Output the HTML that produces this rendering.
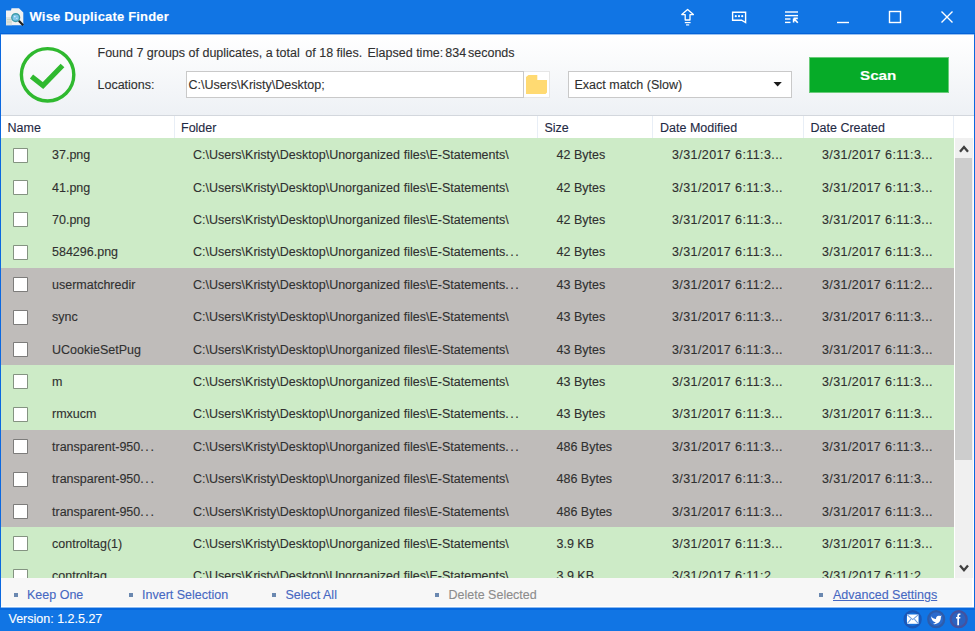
<!DOCTYPE html>
<html><head><meta charset="utf-8"><style>
html,body{margin:0;padding:0;}
body{width:975px;height:631px;overflow:hidden;position:relative;background:#1175e4;font-family:"Liberation Sans",sans-serif;font-size:12.5px;color:#303030;-webkit-text-stroke:0.12px currentColor;}
.a{position:absolute;}
.t{position:absolute;white-space:nowrap;line-height:1;}
.title{color:#fff;font-weight:bold;font-size:13px;}
.hdr{color:#1f2a44;}
.row{position:absolute;left:1px;width:953px;}
.g{background:#cdebc7;}
.d{background:#bfbcba;}
.cb{position:absolute;left:13px;width:13px;height:13px;border:1px solid rgba(60,60,60,0.5);background:#fff;background-clip:padding-box;border-radius:1px;}
.lnk{color:#4668c2;}
.dis{color:#8c8c8c;}
.bul{position:absolute;width:4px;height:4px;background:#6a88b0;}
</style></head><body>
<div class="a" style="left:0;top:0;width:975px;height:33px;background:#1175e4;"></div>
<div class="a" style="left:0;top:33px;width:975px;height:1px;background:#0563d8;"></div>
<div class="a" style="left:1px;top:34px;width:973px;height:1px;background:#9cc3f0;"></div>
<svg class="a" style="left:0;top:0" width="30" height="30" viewBox="0 0 30 30">
<path d="M6 10.5 L11 10.5 L11.5 8.3 L19 8.3 L23.3 12.6 L23.3 25.2 L6 25.2 Z" fill="#f2f2f2"/>
<path d="M6 17 L12 17 L12 25.2 L6 25.2 Z" fill="#dfe3df"/>
<path d="M7 19.5 L11.5 19.5 M7 22 L11.5 22" stroke="#c8d8c8" stroke-width="1"/>
<line x1="18.8" y1="20.8" x2="23.2" y2="25.2" stroke="#1e1e1e" stroke-width="2.2"/>
<circle cx="15.7" cy="17.6" r="3.9" fill="#7cc4e8" stroke="#3e9aa8" stroke-width="1.4"/>
<circle cx="14.8" cy="16.6" r="0.8" fill="#d8f0ff"/>
<circle cx="16.8" cy="18.4" r="0.7" fill="#c0e4ff"/>
</svg>
<div class="t title" style="left:29.5px;top:9.80px;letter-spacing:0.18px;">Wise Duplicate Finder</div>
<svg class="a" style="left:660px;top:0" width="315" height="33" viewBox="660 0 315 33" fill="none" stroke="#fff" stroke-width="1.4">
<path d="M687.6 9.4 L693.4 14.6 L690 14.6 L690 20 L685.2 20 L685.2 14.6 L681.8 14.6 Z" stroke-linejoin="round" stroke-width="1.3"/>
<line x1="684.8" y1="22.6" x2="690.6" y2="22.6" stroke-width="1.2"/>
<line x1="686" y1="24.9" x2="689.2" y2="24.9" stroke-width="1.2"/>
<path d="M732.6 12.2 L745.6 12.2 L745.6 22.5 L741.6 20.2 L732.6 20.2 Z"/>
<circle cx="735.8" cy="16.2" r="1.1" fill="#fff" stroke="none"/>
<circle cx="739" cy="16.2" r="1.1" fill="#fff" stroke="none"/>
<circle cx="742.2" cy="16.2" r="1.1" fill="#fff" stroke="none"/>
<line x1="785" y1="12" x2="798" y2="12"/>
<line x1="785" y1="15.6" x2="798" y2="15.6"/>
<line x1="785" y1="19" x2="790.5" y2="19"/>
<line x1="785" y1="22.4" x2="790.5" y2="22.4"/>
<path d="M797.8 22.8 L793.8 18.6 M793.6 18.4 L793.6 22.4 M793.6 18.4 L797.8 18.4" stroke-width="1.6"/>
<line x1="837" y1="22.5" x2="849" y2="22.5"/>
<rect x="889.5" y="11.5" width="11" height="11"/>
<path d="M941.5 11.5 L952.5 22.5 M952.5 11.5 L941.5 22.5"/>
</svg>
<div class="a" style="left:1px;top:35px;width:973px;height:572px;background:#fff;"></div>
<div class="a" style="left:0;top:35px;width:1px;height:572px;background:#0b68df;"></div>
<div class="a" style="left:974px;top:35px;width:1px;height:572px;background:#0b68df;"></div>
<div class="a" style="left:1px;top:35px;width:973px;height:80px;background:linear-gradient(#ffffff,#eef1f5);"></div>
<svg class="a" style="left:10px;top:40px" width="80" height="70" viewBox="10 40 80 70">
<circle cx="47.6" cy="74.8" r="26.2" fill="none" stroke="#2fb92f" stroke-width="3.4"/>
<path d="M31.5 76.5 L43 85.5 L62.5 65.5" fill="none" stroke="#2fb92f" stroke-width="5.2"/>
</svg>
<div class="t " style="left:97.5px;top:46.82px;">Found 7 groups of duplicates, a total</div>
<div class="t " style="left:305.3px;top:46.82px;">of 18 files.</div>
<div class="t " style="left:367.5px;top:46.82px;">Elapsed time:</div>
<div class="t " style="left:445.3px;top:46.82px;">834</div>
<div class="t " style="left:468px;top:46.82px;">seconds</div>
<div class="t " style="left:97.5px;top:78.82px;">Locations:</div>
<div class="a" style="left:186px;top:71px;width:336px;height:25px;border:1px solid #c9c9c9;background:#fff;"></div>
<div class="t " style="left:188.5px;top:78.92px;">C:\Users\Kristy\Desktop;</div>
<div class="a" style="left:524px;top:71px;width:25px;height:25px;border:1px solid #e6e6e6;border-left:none;background:#fff;"></div>
<svg class="a" style="left:524px;top:70px" width="28" height="28" viewBox="524 70 28 28">
<path d="M526 77 L528.5 75 L537.3 75 L537.3 80 L547 80 L547 92.5 L545.5 94 L526 94 Z" fill="#ffda72"/>
</svg>
<div class="a" style="left:568px;top:71px;width:222px;height:25px;border:1px solid #c9c9c9;background:#fff;"></div>
<div class="t " style="left:574.5px;top:78.82px;">Exact match (Slow)</div>
<svg class="a" style="left:770px;top:78px" width="16" height="12" viewBox="770 78 16 12"><path d="M773.5 82 L781.8 82 L777.65 86.5 Z" fill="#1a1a1a"/></svg>
<div class="a" style="left:809px;top:57px;width:138px;height:34px;background:#06ab28;border:1px solid #6acb7a;"></div>
<div class="t title" style="left:860px;top:68.77px;transform:scaleX(1.17);transform-origin:0 0;">Scan</div>
<div class="a" style="left:1px;top:115px;width:973px;height:1px;background:#d3d7dd;"></div>
<div class="a" style="left:1px;top:116px;width:973px;height:22px;background:#fff;"></div>
<div class="a" style="left:174px;top:116px;width:1px;height:22px;background:#e8eef6;"></div>
<div class="a" style="left:537px;top:116px;width:1px;height:22px;background:#e8eef6;"></div>
<div class="a" style="left:652px;top:116px;width:1px;height:22px;background:#e8eef6;"></div>
<div class="a" style="left:803px;top:116px;width:1px;height:22px;background:#e8eef6;"></div>
<div class="a" style="left:953px;top:116px;width:1px;height:22px;background:#e8eef6;"></div>
<div class="t hdr" style="left:7.5px;top:122.02px;">Name</div>
<div class="t hdr" style="left:181px;top:122.02px;">Folder</div>
<div class="t hdr" style="left:544.5px;top:122.02px;">Size</div>
<div class="t hdr" style="left:660px;top:122.02px;">Date Modified</div>
<div class="t hdr" style="left:810.5px;top:122.02px;">Date Created</div>
<div class="a" style="left:0;top:138px;width:975px;height:440px;overflow:hidden;">
<div class="row g" style="top:0px;height:32px;"></div>
<div class="cb" style="top:10px;"></div>
<div class="t " style="left:52px;top:11.12px;">37.png</div>
<div class="t " style="left:193px;top:11.12px;">C:\Users\Kristy\Desktop\Unorganized</div>
<div class="t " style="left:403.8px;top:11.12px;">files\E-Statements\</div>
<div class="t " style="left:556.5px;top:11.12px;">42 Bytes</div>
<div class="t " style="left:672px;top:11.12px;letter-spacing:0.4px;">3/31/2017 6:11:3...</div>
<div class="t " style="left:822px;top:11.12px;letter-spacing:0.4px;">3/31/2017 6:11:3...</div>
<div class="row g" style="top:32px;height:33px;"></div>
<div class="cb" style="top:42px;"></div>
<div class="t " style="left:52px;top:43.52px;">41.png</div>
<div class="t " style="left:193px;top:43.52px;">C:\Users\Kristy\Desktop\Unorganized</div>
<div class="t " style="left:403.8px;top:43.52px;">files\E-Statements\</div>
<div class="t " style="left:556.5px;top:43.52px;">42 Bytes</div>
<div class="t " style="left:672px;top:43.52px;letter-spacing:0.4px;">3/31/2017 6:11:3...</div>
<div class="t " style="left:822px;top:43.52px;letter-spacing:0.4px;">3/31/2017 6:11:3...</div>
<div class="row g" style="top:65px;height:32px;"></div>
<div class="cb" style="top:74px;"></div>
<div class="t " style="left:52px;top:75.92px;">70.png</div>
<div class="t " style="left:193px;top:75.92px;">C:\Users\Kristy\Desktop\Unorganized</div>
<div class="t " style="left:403.8px;top:75.92px;">files\E-Statements\</div>
<div class="t " style="left:556.5px;top:75.92px;">42 Bytes</div>
<div class="t " style="left:672px;top:75.92px;letter-spacing:0.4px;">3/31/2017 6:11:3...</div>
<div class="t " style="left:822px;top:75.92px;letter-spacing:0.4px;">3/31/2017 6:11:3...</div>
<div class="row g" style="top:97px;height:33px;"></div>
<div class="cb" style="top:107px;"></div>
<div class="t " style="left:52px;top:108.32px;">584296.png</div>
<div class="t " style="left:193px;top:108.32px;">C:\Users\Kristy\Desktop\Unorganized</div>
<div class="t " style="left:403.8px;top:108.32px;">files\E-Statements<span style="letter-spacing:1.5px">...</span></div>
<div class="t " style="left:556.5px;top:108.32px;">42 Bytes</div>
<div class="t " style="left:672px;top:108.32px;letter-spacing:0.4px;">3/31/2017 6:11:3...</div>
<div class="t " style="left:822px;top:108.32px;letter-spacing:0.4px;">3/31/2017 6:11:3...</div>
<div class="row d" style="top:130px;height:32px;"></div>
<div class="cb" style="top:139px;"></div>
<div class="t " style="left:52px;top:140.72px;">usermatchredir</div>
<div class="t " style="left:193px;top:140.72px;">C:\Users\Kristy\Desktop\Unorganized</div>
<div class="t " style="left:403.8px;top:140.72px;">files\E-Statements<span style="letter-spacing:1.5px">...</span></div>
<div class="t " style="left:556.5px;top:140.72px;">43 Bytes</div>
<div class="t " style="left:672px;top:140.72px;letter-spacing:0.4px;">3/31/2017 6:11:2...</div>
<div class="t " style="left:822px;top:140.72px;letter-spacing:0.4px;">3/31/2017 6:11:2...</div>
<div class="row d" style="top:162px;height:32px;"></div>
<div class="cb" style="top:172px;"></div>
<div class="t " style="left:52px;top:173.12px;">sync</div>
<div class="t " style="left:193px;top:173.12px;">C:\Users\Kristy\Desktop\Unorganized</div>
<div class="t " style="left:403.8px;top:173.12px;">files\E-Statements\</div>
<div class="t " style="left:556.5px;top:173.12px;">43 Bytes</div>
<div class="t " style="left:672px;top:173.12px;letter-spacing:0.4px;">3/31/2017 6:11:3...</div>
<div class="t " style="left:822px;top:173.12px;letter-spacing:0.4px;">3/31/2017 6:11:3...</div>
<div class="row d" style="top:194px;height:33px;"></div>
<div class="cb" style="top:204px;"></div>
<div class="t " style="left:52px;top:205.52px;">UCookieSetPug</div>
<div class="t " style="left:193px;top:205.52px;">C:\Users\Kristy\Desktop\Unorganized</div>
<div class="t " style="left:403.8px;top:205.52px;">files\E-Statements\</div>
<div class="t " style="left:556.5px;top:205.52px;">43 Bytes</div>
<div class="t " style="left:672px;top:205.52px;letter-spacing:0.4px;">3/31/2017 6:11:3...</div>
<div class="t " style="left:822px;top:205.52px;letter-spacing:0.4px;">3/31/2017 6:11:3...</div>
<div class="row g" style="top:227px;height:32px;"></div>
<div class="cb" style="top:236px;"></div>
<div class="t " style="left:52px;top:237.92px;">m</div>
<div class="t " style="left:193px;top:237.92px;">C:\Users\Kristy\Desktop\Unorganized</div>
<div class="t " style="left:403.8px;top:237.92px;">files\E-Statements\</div>
<div class="t " style="left:556.5px;top:237.92px;">43 Bytes</div>
<div class="t " style="left:672px;top:237.92px;letter-spacing:0.4px;">3/31/2017 6:11:3...</div>
<div class="t " style="left:822px;top:237.92px;letter-spacing:0.4px;">3/31/2017 6:11:3...</div>
<div class="row g" style="top:259px;height:33px;"></div>
<div class="cb" style="top:269px;"></div>
<div class="t " style="left:52px;top:270.32px;">rmxucm</div>
<div class="t " style="left:193px;top:270.32px;">C:\Users\Kristy\Desktop\Unorganized</div>
<div class="t " style="left:403.8px;top:270.32px;">files\E-Statements<span style="letter-spacing:1.5px">...</span></div>
<div class="t " style="left:556.5px;top:270.32px;">43 Bytes</div>
<div class="t " style="left:672px;top:270.32px;letter-spacing:0.4px;">3/31/2017 6:11:3...</div>
<div class="t " style="left:822px;top:270.32px;letter-spacing:0.4px;">3/31/2017 6:11:3...</div>
<div class="row d" style="top:292px;height:32px;"></div>
<div class="cb" style="top:301px;"></div>
<div class="t " style="left:52px;top:302.72px;">transparent-950<span style="letter-spacing:1.6px">...</span></div>
<div class="t " style="left:193px;top:302.72px;">C:\Users\Kristy\Desktop\Unorganized</div>
<div class="t " style="left:403.8px;top:302.72px;">files\E-Statements<span style="letter-spacing:1.5px">...</span></div>
<div class="t " style="left:556.5px;top:302.72px;">486 Bytes</div>
<div class="t " style="left:672px;top:302.72px;letter-spacing:0.4px;">3/31/2017 6:11:3...</div>
<div class="t " style="left:822px;top:302.72px;letter-spacing:0.4px;">3/31/2017 6:11:3...</div>
<div class="row d" style="top:324px;height:32px;"></div>
<div class="cb" style="top:334px;"></div>
<div class="t " style="left:52px;top:335.12px;">transparent-950<span style="letter-spacing:1.6px">...</span></div>
<div class="t " style="left:193px;top:335.12px;">C:\Users\Kristy\Desktop\Unorganized</div>
<div class="t " style="left:403.8px;top:335.12px;">files\E-Statements\</div>
<div class="t " style="left:556.5px;top:335.12px;">486 Bytes</div>
<div class="t " style="left:672px;top:335.12px;letter-spacing:0.4px;">3/31/2017 6:11:3...</div>
<div class="t " style="left:822px;top:335.12px;letter-spacing:0.4px;">3/31/2017 6:11:3...</div>
<div class="row d" style="top:356px;height:33px;"></div>
<div class="cb" style="top:366px;"></div>
<div class="t " style="left:52px;top:367.52px;">transparent-950<span style="letter-spacing:1.6px">...</span></div>
<div class="t " style="left:193px;top:367.52px;">C:\Users\Kristy\Desktop\Unorganized</div>
<div class="t " style="left:403.8px;top:367.52px;">files\E-Statements\</div>
<div class="t " style="left:556.5px;top:367.52px;">486 Bytes</div>
<div class="t " style="left:672px;top:367.52px;letter-spacing:0.4px;">3/31/2017 6:11:3...</div>
<div class="t " style="left:822px;top:367.52px;letter-spacing:0.4px;">3/31/2017 6:11:3...</div>
<div class="row g" style="top:389px;height:32px;"></div>
<div class="cb" style="top:398px;"></div>
<div class="t " style="left:52px;top:399.92px;">controltag(1)</div>
<div class="t " style="left:193px;top:399.92px;">C:\Users\Kristy\Desktop\Unorganized</div>
<div class="t " style="left:403.8px;top:399.92px;">files\E-Statements\</div>
<div class="t " style="left:556.5px;top:399.92px;">3.9 KB</div>
<div class="t " style="left:672px;top:399.92px;letter-spacing:0.4px;">3/31/2017 6:11:3...</div>
<div class="t " style="left:822px;top:399.92px;letter-spacing:0.4px;">3/31/2017 6:11:3...</div>
<div class="row g" style="top:421px;height:33px;"></div>
<div class="cb" style="top:431px;"></div>
<div class="t " style="left:52px;top:432.32px;">controltag</div>
<div class="t " style="left:193px;top:432.32px;">C:\Users\Kristy\Desktop\Unorganized</div>
<div class="t " style="left:403.8px;top:432.32px;">files\E-Statements\</div>
<div class="t " style="left:556.5px;top:432.32px;">3.9 KB</div>
<div class="t " style="left:672px;top:432.32px;letter-spacing:0.4px;">3/31/2017 6:11:2...</div>
<div class="t " style="left:822px;top:432.32px;letter-spacing:0.4px;">3/31/2017 6:11:2...</div>
</div>
<div class="a" style="left:955px;top:138px;width:18px;height:440px;background:#f0f0f0;"></div>
<div class="a" style="left:955px;top:158px;width:17px;height:302px;background:#cdcdcd;"></div>
<svg class="a" style="left:954px;top:138px" width="19" height="440" viewBox="954 138 19 440" fill="none" stroke="#404040" stroke-width="2.3">
<path d="M960 151.8 L964 147 L968 151.8"/>
<path d="M960 565.5 L964 570.3 L968 565.5"/>
</svg>
<div class="a" style="left:1px;top:578px;width:971px;height:28px;background:#f7f7f7;"></div>
<div class="bul" style="left:14px;top:593px;"></div>
<div class="t lnk" style="left:27px;top:588.82px;">Keep One</div>
<div class="bul" style="left:128.5px;top:593px;"></div>
<div class="t lnk" style="left:142px;top:588.82px;">Invert Selection</div>
<div class="bul" style="left:272px;top:593px;"></div>
<div class="t lnk" style="left:285.5px;top:588.82px;">Select All</div>
<div class="bul" style="left:435px;top:593px;"></div>
<div class="t dis" style="left:448.5px;top:588.82px;">Delete Selected</div>
<div class="bul" style="left:819px;top:593px;"></div>
<div class="t lnk" style="left:833px;top:588.82px;text-decoration:underline;">Advanced Settings</div>
<div class="a" style="left:0;top:607px;width:975px;height:24px;background:#1175e4;"></div>
<div class="a" style="left:1px;top:607px;width:973px;height:1px;background:#8cbaf0;"></div>
<div class="a" style="left:0;top:608px;width:975px;height:2px;background:#0667de;"></div>
<div class="t " style="left:8.5px;top:612.92px;color:#fff;">Version: 1.2.5.27</div>
<svg class="a" style="left:895px;top:607px" width="80" height="24" viewBox="895 607 80 24">
<circle cx="912.6" cy="619.2" r="8" fill="#1570dc" stroke="#1a58b8" stroke-width="2.4"/>
<rect x="907" y="614.5" width="11.5" height="9.3" fill="#fff"/>
<path d="M907.3 614.8 L912.7 619.6 L918.2 614.8 M907.3 623.5 L911 619.2 M918.2 623.5 L914.4 619.2" fill="none" stroke="#6f9fe0" stroke-width="1.1"/>
<circle cx="936.2" cy="619.2" r="8" fill="#2a6acc" stroke="#2d5cab" stroke-width="2.2"/>
<path d="M931 616.2 C932.4 618 934 618.8 936 618.9 C935.8 616.6 938 614.9 940.1 616.1 L941.6 615.5 L940.9 617 C941 621.8 937.5 624.8 932.8 624 C934.2 623.6 935.2 623 935.8 622.2 C933 622 931.4 619.8 931 616.2 Z" fill="#fff"/>
<circle cx="958.7" cy="619.2" r="8" fill="#2a62c0" stroke="#44529f" stroke-width="2.2"/>
<path d="M957.3 625.3 L957.3 618.6 L956 618.6 L956 617 L957.3 617 L957.3 615.6 C957.3 613.9 958.4 613.3 960.4 613.5 L960.4 615 C959.4 614.9 959 615.2 959 615.9 L959 617 L960.4 617 L960.2 618.6 L959 618.6 L959 625.3 Z" fill="#fff"/>
</svg>
</body></html>
